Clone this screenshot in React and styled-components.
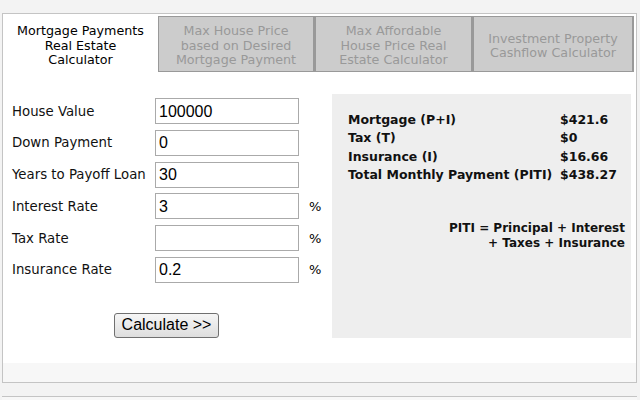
import React from 'react';
import styled, { createGlobalStyle } from 'styled-components';

const GlobalStyle = createGlobalStyle`
  html, body {
    margin: 0;
    padding: 0;
    background: #f3f3f3;
  }
  body {
    font-family: "DejaVu Sans", Verdana, sans-serif;
    font-size: 13px;
    color: #000;
  }
`;

const Page = styled.div`
  width: 640px;
  height: 400px;
  padding: 13px 0 0 2px;
  box-sizing: border-box;
  overflow: hidden;
`;

const Frame = styled.div`
  width: 635px;
  height: 370px;
  box-sizing: border-box;
  border: 1px solid #c4c4c4;
  background: #fff;
  display: flex;
  flex-direction: column;
`;

const Tabs = styled.div`
  display: flex;
  padding-top: 2px;
`;

const Tab = styled.div`
  width: ${p => p.$w}px;
  height: 56px;
  box-sizing: border-box;
  display: flex;
  align-items: center;
  justify-content: center;
  text-align: center;
  line-height: 14.5px;
  font-size: 12.7px;
  padding: 4px 4px 0;
  background: ${p => (p.$active ? '#fff' : '#cccccc')};
  color: ${p => (p.$active ? '#000' : '#999')};
  border: ${p => (p.$active ? 'none' : '1px solid #999')};
  border-right: ${p => (p.$active ? 'none' : '2px solid #999')};
`;

const Body = styled.div`
  flex: 1;
  display: flex;
  padding: 24px 0 0 9px;
`;

const Form = styled.div`
  width: 320px;
  display: flex;
  flex-direction: column;
  padding-top: 2px;
`;

const Row = styled.div`
  display: flex;
  align-items: center;
  height: 26px;
  margin-bottom: 5.8px;
`;

const Label = styled.label`
  width: 143px;
  font-size: 13.3px;
  color: #111;
`;

const Input = styled.input`
  width: 144px;
  height: 26px;
  box-sizing: border-box;
  border: 1px solid #aaa;
  padding: 1px 3px 0;
  font-family: "Liberation Sans", Arial, sans-serif;
  font-size: 16px;
  color: #000;
  outline: none;
`;

const Unit = styled.span`
  margin-left: 10px;
  font-size: 13px;
`;

const ButtonRow = styled.div`
  padding: 24px 0 0 102px;
`;

const Button = styled.button`
  width: 105px;
  height: 25px;
  border: 1px solid #707070;
  border-radius: 3px;
  background: linear-gradient(#f6f6f6, #dedede);
  font-family: "Liberation Sans", Arial, sans-serif;
  font-size: 16px;
  color: #000;
  padding: 0;
`;

const Results = styled.div`
  width: 299px;
  height: 244px;
  margin-top: -2px;
  background: #eeeeee;
  box-sizing: border-box;
  padding: 17px 6px 0 16px;
  display: flex;
  flex-direction: column;
`;

const Table = styled.div`
  display: grid;
  grid-template-columns: 212px auto;
  font-weight: bold;
  font-size: 12.5px;
  line-height: 18.4px;
  color: #111;
`;

const Note = styled.div`
  margin-top: 36px;
  text-align: right;
  font-weight: bold;
  font-size: 12px;
  line-height: 15px;
  color: #111;
`;

const Footer = styled.div`
  height: 19px;
  background: #f7f7f7;
`;

const NextBox = styled.div`
  margin-top: 13px;
  width: 635px;
  border-top: 1px solid #c4c4c4;
  height: 10px;
  background: #f7f7f7;
`;

const tabs = [
  { w: 155, text: ['Mortgage Payments', 'Real Estate', 'Calculator'], active: true },
  { w: 157, text: ['Max House Price', 'based on Desired', 'Mortgage Payment'] },
  { w: 158, text: ['Max Affordable', 'House Price Real', 'Estate Calculator'] },
  { w: 161, text: ['Investment Property', 'Cashflow Calculator'] },
];

const fields = [
  { label: 'House Value', value: '100000' },
  { label: 'Down Payment', value: '0' },
  { label: 'Years to Payoff Loan', value: '30' },
  { label: 'Interest Rate', value: '3', unit: '%' },
  { label: 'Tax Rate', value: '', unit: '%' },
  { label: 'Insurance Rate', value: '0.2', unit: '%' },
];

const results = [
  ['Mortgage (P+I)', '$421.6'],
  ['Tax (T)', '$0'],
  ['Insurance (I)', '$16.66'],
  ['Total Monthly Payment (PITI)', '$438.27'],
];

export default function App() {
  return (
    <Page>
      <GlobalStyle />
      <Frame>
        <Tabs>
          {tabs.map((t, i) => (
            <Tab key={i} $w={t.w} $active={t.active}>
              <div>
                {t.text.map((line, j) => (
                  <div key={j}>{line}</div>
                ))}
              </div>
            </Tab>
          ))}
        </Tabs>
        <Body>
          <Form>
            {fields.map(f => (
              <Row key={f.label}>
                <Label>{f.label}</Label>
                <Input defaultValue={f.value} />
                {f.unit && <Unit>{f.unit}</Unit>}
              </Row>
            ))}
            <ButtonRow>
              <Button>Calculate &gt;&gt;</Button>
            </ButtonRow>
          </Form>
          <Results>
            <Table>
              {results.map(([k, v]) => (
                <React.Fragment key={k}>
                  <span>{k}</span>
                  <span>{v}</span>
                </React.Fragment>
              ))}
            </Table>
            <Note>
              PITI = Principal + Interest
              <br />
              + Taxes + Insurance
            </Note>
          </Results>
        </Body>
        <Footer />
      </Frame>
      <NextBox />
    </Page>
  );
}
